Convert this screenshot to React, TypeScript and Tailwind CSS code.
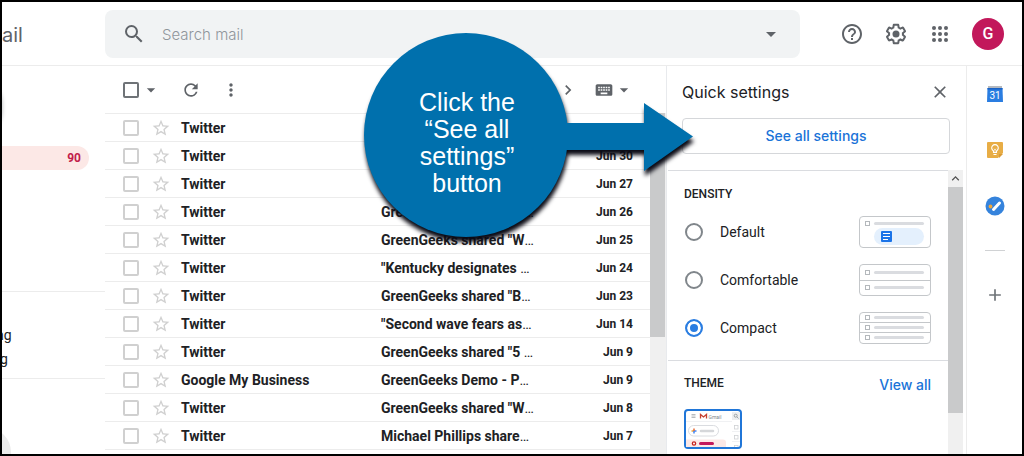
import React, { useState } from "react";
import {
  MdAdd,
  MdArrowDropDown,
  MdChevronRight,
  MdClose,
  MdHelpOutline,
  MdKeyboard,
  MdKeyboardArrowUp,
  MdMoreVert,
  MdRefresh,
  MdSearch,
  MdStarBorder,
} from "react-icons/md";

type Mail = {
  id: number;
  sender: string;
  subject?: string;
  date?: string;
};

const mails: Mail[] = [
  { id: 1, sender: "Twitter" },
  { id: 2, sender: "Twitter", date: "Jun 30" },
  { id: 3, sender: "Twitter", date: "Jun 27" },
  { id: 4, sender: "Twitter", subject: 'GreenGeeks shared "W', date: "Jun 26" },
  { id: 5, sender: "Twitter", subject: 'GreenGeeks shared "W', date: "Jun 25" },
  { id: 6, sender: "Twitter", subject: '"Kentucky designates ', date: "Jun 24" },
  { id: 7, sender: "Twitter", subject: 'GreenGeeks shared "B', date: "Jun 23" },
  { id: 8, sender: "Twitter", subject: '"Second wave fears as', date: "Jun 14" },
  { id: 9, sender: "Twitter", subject: 'GreenGeeks shared "5 ', date: "Jun 9" },
  { id: 10, sender: "Google My Business", subject: "GreenGeeks Demo - P", date: "Jun 9" },
  { id: 11, sender: "Twitter", subject: 'GreenGeeks shared "W', date: "Jun 8" },
  { id: 12, sender: "Twitter", subject: "Michael Phillips share", date: "Jun 7" },
];

const SettingsIcon = () => (
  <svg viewBox="0 0 24 24" className="size-6" fill="currentColor">
    <path d="M13.85 22.25h-3.7c-.74 0-1.36-.54-1.45-1.27l-.27-1.89c-.27-.14-.53-.29-.79-.46l-1.8.72c-.7.26-1.47-.03-1.81-.65L2.2 15.53c-.35-.66-.2-1.44.36-1.88l1.53-1.19c-.01-.15-.02-.3-.02-.46 0-.15.01-.31.02-.46l-1.52-1.19c-.59-.45-.74-1.26-.37-1.88l1.85-3.19c.34-.62 1.11-.9 1.79-.63l1.81.73c.26-.17.52-.32.78-.46l.27-1.91c.09-.7.71-1.25 1.44-1.25h3.7c.74 0 1.36.54 1.45 1.27l.27 1.89c.27.14.53.29.79.46l1.8-.72c.71-.26 1.48.03 1.82.65l1.84 3.18c.36.66.2 1.44-.36 1.88l-1.52 1.19c.01.15.02.3.02.46s-.01.31-.02.46l1.52 1.19c.56.45.72 1.23.37 1.86l-1.86 3.22c-.34.62-1.11.9-1.8.63l-1.8-.72c-.26.17-.52.32-.78.46l-.27 1.91c-.1.68-.72 1.22-1.46 1.22zm-3.23-2h2.76l.37-2.55.53-.22c.44-.18.88-.44 1.34-.78l.45-.34 2.38.96 1.38-2.4-2.03-1.58.07-.56c.03-.26.06-.51.06-.78s-.03-.53-.06-.78l-.07-.56 2.03-1.58-1.39-2.4-2.39.96-.45-.35c-.42-.32-.87-.58-1.33-.77l-.52-.22-.37-2.55h-2.76l-.37 2.55-.53.21c-.44.19-.88.44-1.34.79l-.45.33-2.38-.95-1.39 2.39 2.03 1.58-.07.56a7 7 0 0 0-.06.79c0 .26.02.53.06.78l.07.56-2.03 1.58 1.38 2.4 2.39-.96.45.35c.43.33.86.58 1.33.77l.53.22.38 2.55z" />
    <circle cx="12" cy="12" r="3.5" />
  </svg>
);

const AppsIcon = () => (
  <svg viewBox="0 0 24 24" className="size-6" fill="currentColor">
    {[6, 12, 18].map((y) =>
      [6, 12, 18].map((x) => <circle key={`${x}-${y}`} cx={x} cy={y} r="2" />)
    )}
  </svg>
);

const CalendarIcon = () => (
  <svg viewBox="0 0 20 20" className="size-5">
    <path d="M3 2h14v3H3z" fill="#b4b9c0" />
    <path d="M2.5 4h15l.5 14H2z" fill="#2a7de1" />
    <path d="M2.5 4h15v1.500h-15z" fill="#1a62c4" />
    <text x="10" y="15" textAnchor="middle" fontFamily="Roboto" fontSize="10" fill="#fff">
      31
    </text>
  </svg>
);

const KeepIcon = () => (
  <svg viewBox="0 0 20 20" className="size-5">
    <path d="M3 2h14a1 1 0 0 1 1 1v10l-5 5H3a1 1 0 0 1-1-1V3a1 1 0 0 1 1-1z" fill="#e8ad45" />
    <path d="M18 14l-4 4v-4z" fill="#d99a35" />
    <path
      d="M8.500 12.500v-1.600a3.300 3.300 0 1 1 3 0v1.600zM8.500 14.500h3"
      fill="none"
      stroke="#fff"
      strokeWidth="1.100"
    />
    <path d="M10 12V9.500M8.800 8.800l1.200 1 1.200-1" fill="none" stroke="#fff" strokeWidth=".7" />
  </svg>
);

const TasksIcon = () => (
  <svg viewBox="0 0 20 20" className="size-5">
    <circle cx="10" cy="10" r="9.500" fill="#3583dc" />
    <path d="M8.500 13.500l6-6.500" stroke="#fff" strokeWidth="3" strokeLinecap="round" />
    <circle cx="5.500" cy="10.500" r="1.900" fill="#f2a73b" />
  </svg>
);

const DensityPreview = ({ kind }: { kind: string }) => {
  const lines = kind === "Default" ? [7.5] : kind === "Comfortable" ? [8.5, 23.5] : [5.5, 15.5, 25.5];
  const dividers = kind === "Default" ? [] : kind === "Comfortable" ? [16.5] : [10.5, 20.5];
  return (
    <svg viewBox="0 0 72 32" className="h-8 w-[72px]" fill="none">
      <rect x=".5" y=".5" width="71" height="31" rx="3.500" stroke="#c4c7ca" />
      {dividers.map((y) => (
        <path key={y} d={`M1 ${y}h70`} stroke="#c4c7ca" />
      ))}
      {lines.map((y) => (
        <g key={y}>
          <rect x="6.500" y={y - 2} width="4" height="4" stroke="#b4b8bc" />
          <path d={`M16.500 ${y}h47`} stroke="#dadce0" strokeWidth="3" strokeLinecap="round" />
        </g>
      ))}
      {kind === "Default" && (
        <>
          <rect x="15" y="12" width="50" height="17" rx="8.500" fill="#e4f0fd" />
          <rect x="22" y="15" width="11" height="11" rx="1" fill="#1a73e8" />
          <path d="M24 17.500h7M24 20.500h7M24 23.500h5" stroke="#fff" />
        </>
      )}
    </svg>
  );
};

const ThemePreview = () => (
  <svg viewBox="0 0 54 36" className="h-9 w-[54px]">
    <path d="M5.500 3.500h4M5.500 5h4M5.500 6.500h4" stroke="#a5a9ae" strokeWidth=".8" />
    <path d="M14.500 7.500V3.500l3 2.500 3-2.500v4" fill="none" stroke="#c5402f" strokeWidth="1.300" />
    <text x="22.500" y="7.500" fontFamily="Roboto" fontSize="5" fill="#80868b">
      Gmail
    </text>
    <rect x="46" y="1" width="8" height="8" fill="#eceef0" />
    <circle cx="49.700" cy="4.700" r="1.500" fill="none" stroke="#80868b" strokeWidth=".7" />
    <path d="M51 6l1.500 1.500" stroke="#80868b" strokeWidth=".7" />
    <path d="M0 10.500h46M46 20.500h8M46 30.500h8" stroke="#eceef0" strokeWidth=".8" />
    <rect x="2.500" y="14.500" width="30" height="10.500" rx="5.200" fill="#fff" stroke="#dadce0" />
    <path d="M5.500 20h2.500" stroke="#e9a63a" strokeWidth="1.500" />
    <path d="M8 20h2.500M8 20v2.500" stroke="#4285f4" strokeWidth="1.500" />
    <path d="M8 17.500V20" stroke="#ea6a35" strokeWidth="1.500" />
    <path d="M15 20h12" stroke="#d5d7da" strokeWidth="2.500" strokeLinecap="round" />
    <path d="M0 28.500h37a3 3 0 0 1 3 3V36H0z" fill="#fce8e6" />
    <circle cx="8" cy="32.500" r="1.700" fill="none" stroke="#c5221f" strokeWidth="1.200" />
    <path d="M14.500 32.500h12" stroke="#c2185b" strokeWidth="3" strokeLinecap="round" />
    {[14.5, 24.5, 34.5].map((y) => (
      <rect key={y} x="48.500" y={y} width="3.500" height="3.500" fill="#fff" stroke="#cfd1d4" strokeWidth=".8" />
    ))}
  </svg>
);

const Header = () => (
  <header className="flex h-16 shrink-0 items-center border-b border-[#ececec] text-[#5f6368]">
    <div className="w-[103px] shrink-0 pt-[2px] font-[Inter,sans-serif] text-[20px] leading-6">ail</div>
    <form className="flex h-12 min-w-0 flex-1 items-center rounded-lg bg-[#f1f3f4] pl-[17px] pr-[17px]">
      <button type="button" aria-label="Search">
        <MdSearch className="size-6" />
      </button>
      <input
        type="text"
        placeholder="Search mail"
        aria-label="Search mail"
        className="ml-4 min-w-0 flex-1 bg-transparent pt-[3px] font-[Inter,sans-serif] text-[15px] font-light outline-none placeholder:text-[#8f959b]"
      />
      <button type="button" aria-label="Search options">
        <MdArrowDropDown className="size-6" />
      </button>
    </form>
    <div className="flex items-center gap-5 pl-10 pr-[18px]">
      <button aria-label="Support">
        <MdHelpOutline className="size-6" />
      </button>
      <button aria-label="Settings">
        <SettingsIcon />
      </button>
      <button aria-label="Google apps">
        <AppsIcon />
      </button>
      <button className="size-8 rounded-full bg-[#c2185b] text-base font-medium text-white">G</button>
    </div>
  </header>
);

const Sidebar = () => (
  <nav className="relative w-[103px] shrink-0 overflow-hidden pt-20 text-sm">
    <div className="absolute -left-10 top-4 h-12 w-10 rounded-full shadow-[0_1px_4px_rgba(60,64,67,0.4)]" />
    <a
      href="#inbox"
      className="flex h-6 w-[87px] items-center justify-end rounded-r-full bg-[#fce8e6] pr-2 text-xs font-bold text-[#c2204a]"
    >
      90
    </a>
    <div className="mt-[121px] flex h-[88px] flex-col border-y border-[#ececec] pt-[31px] leading-6 text-[#202124]">
      <a href="#meeting" className="-ml-[6px]">
        ng
      </a>
      <a href="#join" className="-ml-[2px]">
        g
      </a>
    </div>
    <div className="absolute -left-[39px] top-[362px] size-12 rounded-full bg-[#ececec]" />
  </nav>
);

const MailList = () => (
  <main className="flex min-w-0 flex-1 flex-col">
    <div className="flex h-[47px] shrink-0 items-center pl-[18px] pr-8 text-[#5f6368]">
      <input
        type="checkbox"
        aria-label="Select all"
        className="size-4 appearance-none rounded-xs border-2 border-[#6f7377]"
      />
      <button aria-label="Select options" className="ml-[2px]">
        <MdArrowDropDown className="size-5" />
      </button>
      <button aria-label="Refresh" className="ml-5">
        <MdRefresh className="size-5" />
      </button>
      <button aria-label="More" className="ml-5">
        <MdMoreVert className="size-5" />
      </button>
      <button aria-label="Older" className="ml-auto">
        <MdChevronRight className="size-5" />
      </button>
      <button aria-label="Input tools" className="ml-4">
        <MdKeyboard className="size-5" />
      </button>
      <button aria-label="Input tools options">
        <MdArrowDropDown className="size-5" />
      </button>
    </div>
    <div className="flex min-h-0 flex-1">
      <ul className="min-w-0 flex-1">
        {mails.map((mail) => (
          <li
            key={mail.id}
            className="flex h-7 items-center border-t border-[#ececec] pl-[18px] pr-[17px] text-sm font-bold text-[#202124] last:h-[29px] last:border-b"
          >
            <input
              type="checkbox"
              aria-label={mail.sender}
              className="size-4 shrink-0 appearance-none rounded-xs border-2 border-[#d0d0d0]"
            />
            <button aria-label="Star" className="ml-3 text-[#d0d0d0]">
              <MdStarBorder className="size-5" />
            </button>
            <span className="ml-[10px] w-[200px] shrink-0">{mail.sender}</span>
            <span className="flex-1 whitespace-pre">
              {mail.subject}
              {mail.subject && <span className="font-normal">…</span>}
            </span>
            <span className="text-xs">{mail.date}</span>
          </li>
        ))}
      </ul>
      <div className="w-4 bg-[#f0f0f0]">
        <div className="h-56 w-[15px] bg-[#c9cacb]" />
      </div>
    </div>
  </main>
);

const QuickSettings = () => {
  const [density, setDensity] = useState("Compact");
  return (
    <section className="flex w-[300px] shrink-0 flex-col border-l border-[#e8eaed] text-[#202124]">
      <div className="flex h-[52px] shrink-0 items-center justify-between pl-[15px] pr-4">
        <h2 className="font-[Inter,sans-serif] text-base">Quick settings</h2>
        <button aria-label="Close" className="text-[#5f6368]">
          <MdClose className="size-5" />
        </button>
      </div>
      <button className="ml-[15px] mr-4 h-9 shrink-0 rounded border border-[#d5d7da] font-[Inter,sans-serif] text-sm font-medium text-[#1a73d8]">
        See all settings
      </button>
      <div className="mt-4 flex min-h-0 flex-1">
        <div className="flex-1 overflow-hidden pl-px">
          <div className="border-y border-[#dadce0] pb-2 pl-4 pr-[17px]">
            <h3 className="pb-[6px] pt-[15px] text-xs font-medium leading-4">DENSITY</h3>
            {["Default", "Comfortable", "Compact"].map((name) => (
              <label key={name} className="flex h-12 items-center text-sm">
                <input
                  type="radio"
                  name="density"
                  checked={density === name}
                  onChange={() => setDensity(name)}
                  className="ml-px mr-[17px] size-[18px] appearance-none rounded-full border-2 border-[#80868b] checked:border-[#2a7de1] checked:bg-[#2a7de1] checked:shadow-[inset_0_0_0_3px_white]"
                />
                <span className="flex-1">{name}</span>
                <DensityPreview kind={name} />
              </label>
            ))}
          </div>
          <div className="pl-4 pr-[17px] pt-[14px]">
            <div className="flex items-start justify-between">
              <h3 className="text-xs font-medium">THEME</h3>
              <a href="#themes" className="font-[Inter,sans-serif] text-sm font-medium leading-5 text-[#1a73d8]">
                View all
              </a>
            </div>
            <button aria-label="Default theme" className="mt-[14px] block rounded border-2 border-[#2076d8]">
              <ThemePreview />
            </button>
          </div>
        </div>
        <div className="mr-[3px] flex w-[15px] flex-col bg-[#f0f0f0]">
          <button aria-label="Scroll up" className="flex h-[17px] items-center justify-center text-[#505050]">
            <MdKeyboardArrowUp className="size-[15px]" />
          </button>
          <div className="h-[226px] bg-[#c9cacb]" />
        </div>
      </div>
    </section>
  );
};

const SideRail = () => (
  <aside className="flex w-14 shrink-0 flex-col items-center border-l border-[#ececec] pt-[18px]">
    <button aria-label="Calendar">
      <CalendarIcon />
    </button>
    <button aria-label="Keep" className="mt-9">
      <KeepIcon />
    </button>
    <button aria-label="Tasks" className="mt-9">
      <TasksIcon />
    </button>
    <hr className="mt-[34px] w-5 border-[#d0d2d4]" />
    <button aria-label="Get add-ons" className="mt-[34px] text-[#6f7478]">
      <MdAdd className="size-5" />
    </button>
  </aside>
);

// circle with an arrow that points at the settings button
const Callout = () => (
  <div className="pointer-events-none absolute left-[350px] top-5 h-[240px] w-[360px]">
    <svg viewBox="0 0 360 240" className="size-full overflow-visible">
      <g className="drop-shadow-[1px_5px_2px_rgba(10,10,20,1)]" fill="#0070ad">
        <circle cx="114" cy="113" r="102" />
        <path d="M210 101h82V81l49 33.500L292 149v-21h-82z" />
      </g>
    </svg>
    <p className="absolute left-[55px] top-[67px] w-[120px] text-center font-['Liberation_Sans',sans-serif] text-[25px] leading-[27px] text-white">
      Click the
      <br />
      “See all
      <br />
      settings”
      <br />
      button
    </p>
  </div>
);

const App = () => {
  return (
    <div className="relative flex h-screen flex-col overflow-hidden border-2 border-black bg-white font-[Roboto,sans-serif]">
      <Header />
      <div className="flex min-h-0 flex-1">
        <Sidebar />
        <MailList />
        <QuickSettings />
        <SideRail />
      </div>
      <Callout />
    </div>
  );
};

export default App;
